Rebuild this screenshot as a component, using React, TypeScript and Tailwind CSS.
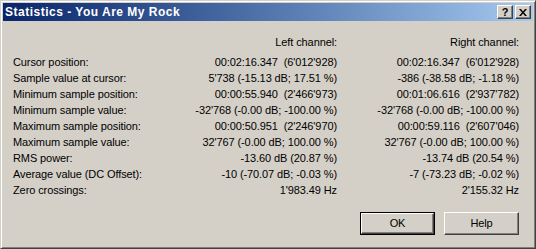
const rows: [string, string, string][] = [
  ['Cursor position:', '00:02:16.347  (6\'012\'928)', '00:02:16.347  (6\'012\'928)'],
  ['Sample value at cursor:', '5\'738 (-15.13 dB; 17.51 %)', '-386 (-38.58 dB; -1.18 %)'],
  ['Minimum sample position:', '00:00:55.940  (2\'466\'973)', '00:01:06.616  (2\'937\'782)'],
  ['Minimum sample value:', '-32\'768 (-0.00 dB; -100.00 %)', '-32\'768 (-0.00 dB; -100.00 %)'],
  ['Maximum sample position:', '00:00:50.951  (2\'246\'970)', '00:00:59.116  (2\'607\'046)'],
  ['Maximum sample value:', '32\'767 (-0.00 dB; 100.00 %)', '32\'767 (-0.00 dB; 100.00 %)'],
  ['RMS power:', '-13.60 dB (20.87 %)', '-13.74 dB (20.54 %)'],
  ['Average value (DC Offset):', '-10 (-70.07 dB; -0.03 %)', '-7 (-73.23 dB; -0.02 %)'],
  ['Zero crossings:', '1\'983.49 Hz', '2\'155.32 Hz'],
]

function CaptionButton({ children }: { children: React.ReactNode }) {
  return (
    <div className="flex h-[14px] w-[16px] items-center justify-center border border-t-white border-l-white border-r-[#404040] border-b-[#404040] bg-[#d4d0c8] shadow-[inset_-1px_-1px_#808080]">
      {children}
    </div>
  )
}

function Button({ label, isDefault }: { label: string; isDefault?: boolean }) {
  return (
    <div className={isDefault ? 'h-[23px] w-[75px] border border-black' : 'h-[23px] w-[75px]'}>
      <div className="flex h-full w-full items-center justify-center border border-t-white border-l-white border-r-[#404040] border-b-[#404040] shadow-[inset_-1px_-1px_#808080] text-[11px] text-black">
        {label}
      </div>
    </div>
  )
}

export default function App() {
  return (
    <div
      className="h-[249px] w-[536px] overflow-hidden border border-t-[#d4d0c8] border-l-[#d4d0c8] border-r-[#404040] border-b-[#404040] bg-[#d4d0c8] p-[2px] shadow-[inset_1px_1px_#fff,inset_-1px_-1px_#808080]"
      style={{ fontFamily: '"Liberation Sans", Arial, sans-serif' }}
    >
      {/* Title bar */}
      <div className="flex h-[18px] items-center justify-between bg-gradient-to-r from-[#0a246a] to-[#a6caf0] pl-[2px] pr-[2px]">
        <span className="text-[12px] font-bold tracking-[0.5px] text-white">Statistics - You Are My Rock</span>
        <div className="flex gap-[2px]">
          <CaptionButton>
            <span className="text-[11px] font-bold leading-none text-black">?</span>
          </CaptionButton>
          <CaptionButton>
            <svg width="8" height="7" viewBox="0 0 8 7">
              <path d="M0 0h2l2 2.5L6 0h2L5 3.5 8 7H6L4 4.5 2 7H0l3-3.5z" fill="#000" />
            </svg>
          </CaptionButton>
        </div>
      </div>

      {/* Body */}
      <div className="pl-[10px] pt-[13px] text-[11px] tracking-[-0.1px] text-black">
        <div className="grid grid-cols-[150px_174px_182px] leading-[16px]">
          <div />
          <div className="text-right">Left channel:</div>
          <div className="text-right">Right channel:</div>
          <div className="col-span-3 h-[4px]" />
          {rows.map(([label, left, right]) => (
            <div key={label} className="contents">
              <div className="whitespace-nowrap">{label}</div>
              <div className="whitespace-pre text-right">{left}</div>
              <div className="whitespace-pre text-right">{right}</div>
            </div>
          ))}
        </div>
        <div className="mt-[14px] flex w-[506px] justify-end gap-[9px]">
          <Button label="OK" isDefault />
          <Button label="Help" />
        </div>
      </div>
    </div>
  )
}
